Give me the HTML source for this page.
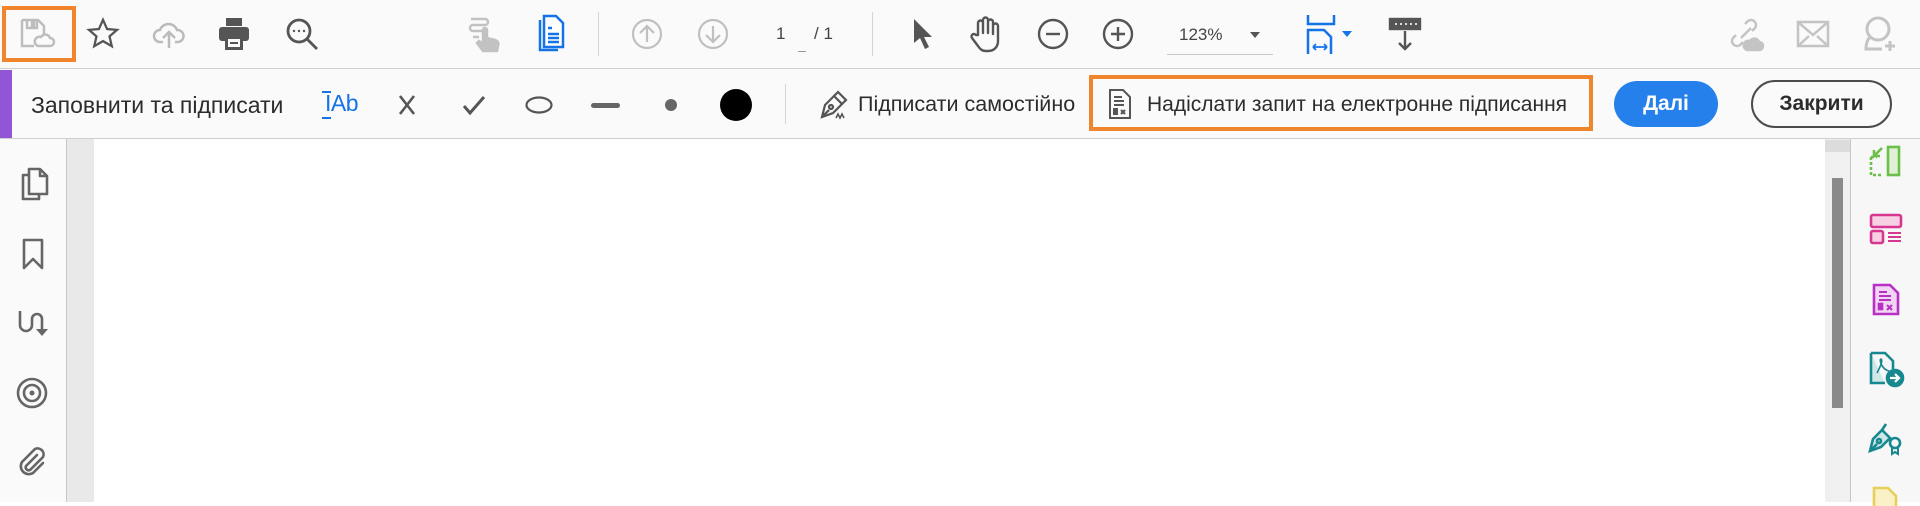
<!DOCTYPE html>
<html><head><meta charset="utf-8"><style>
*{margin:0;padding:0;box-sizing:border-box}
body{width:1920px;height:502px;overflow:hidden;background:#fff;font-family:"Liberation Sans","DejaVu Sans",sans-serif;position:relative}
.a{position:absolute}
svg{position:absolute;overflow:visible}
.t{position:absolute;white-space:nowrap;color:#2c2c2c}
</style></head><body>
<div class="a" style="left:0;top:0;width:1920px;height:69px;background:#fafafa;border-bottom:1px solid #cfcfcf"></div>
<div class="a" style="left:0;top:69px;width:1920px;height:70px;background:#fafafa;border-bottom:1px solid #cfcfcf"></div>
<div class="a" style="left:0;top:70px;width:12px;height:68px;background:#9155d6"></div>
<div class="a" style="left:0;top:139px;width:67px;height:363px;background:#fafafa;border-right:1px solid #c8c8c8"></div>
<div class="a" style="left:67px;top:139px;width:27px;height:363px;background:#e9e9e9"></div>
<div class="a" style="left:1825px;top:139px;width:25px;height:363px;background:#f0f0f0"></div>
<div class="a" style="left:1825px;top:140px;width:25px;height:12px;background:#dcdcdc"></div>
<div class="a" style="left:1832px;top:178px;width:11px;height:230px;background:#8a8a8a"></div>
<div class="a" style="left:1850px;top:139px;width:70px;height:363px;background:#f7f7f7;border-left:1px solid #c8c8c8"></div>

<div class="a" style="left:2px;top:6px;width:74px;height:56px;border:4px solid #f0852d"></div>
<svg style="left:20px;top:18px" width="36" height="32" viewBox="0 0 36 32" fill="none" stroke="#bdbdbd" stroke-width="2.5"><path d="M2 2h16l6 6v8M2 2v26h12"/><path d="M7 2v8h10V2"/><rect x="12" y="4" width="2" height="4" fill="#bdbdbd"/><path d="M18 28h12a4 4 0 0 0 0-8 5 5 0 0 0-9-1 4 4 0 0 0-3 9z"/></svg>
<svg style="left:86px;top:17px" width="34" height="34" viewBox="0 0 24 24" fill="none" stroke="#555" stroke-width="1.6"><path d="M12 2l2.9 6.5 7 .6-5.3 4.6 1.6 6.9L12 17l-6.2 3.6 1.6-6.9L2.1 9.1l7-.6z"/></svg>
<svg style="left:152px;top:18px" width="34" height="32" viewBox="0 0 34 32" fill="none" stroke="#bbb" stroke-width="2.5"><path d="M11 24H8a6 6 0 0 1 0-12 9 9 0 0 1 17 0 6 6 0 0 1 1 12h-3"/><path d="M17 30V14M11 20l6-6 6 6"/></svg>
<svg style="left:218px;top:17px" width="32" height="34" viewBox="0 0 32 34"><rect x="8" y="1" width="16" height="8" fill="#555"/><rect x="1" y="10" width="30" height="14" rx="3" fill="#555"/><rect x="7" y="19" width="18" height="14" fill="#555"/><rect x="10" y="22" width="12" height="8" fill="#fafafa"/><rect x="12" y="25" width="8" height="2" fill="#555"/></svg>
<svg style="left:285px;top:17px" width="36" height="36" viewBox="0 0 36 36" fill="none" stroke="#555" stroke-width="2.8"><circle cx="14" cy="14" r="11"/><path d="M22 22l10 10"/><circle cx="9" cy="14" r="1.2" fill="#555" stroke="none"/><circle cx="14" cy="14" r="1.2" fill="#555" stroke="none"/><circle cx="19" cy="14" r="1.2" fill="#555" stroke="none"/></svg>
<svg style="left:467px;top:15px" width="38" height="38" viewBox="0 0 38 38" fill="none" stroke="#c2c2c2" stroke-width="2.5"><path d="M4 4h14a3 3 0 0 1 0 6H6a3 3 0 0 0 0 6h10M6 22h6"/><path d="M16 36l-6-8 2-2 4 3V15a2 2 0 0 1 4 0v8l8 2c3 1 4 3 3 6l-1 5z" fill="#c2c2c2"/></svg>
<svg style="left:536px;top:14px" width="30" height="38" viewBox="0 0 30 38" fill="none" stroke="#1473e6" stroke-width="2.5"><path d="M4 6v30h18"/><path d="M8 2h12l7 7v24H8z" fill="#fff"/><path d="M12 14h4M12 20h11M12 24h11M12 28h11"/></svg>
<div class="a" style="left:598px;top:12px;width:1px;height:44px;background:#d5d5d5"></div>
<svg style="left:631px;top:18px" width="32" height="32" viewBox="0 0 32 32" fill="none" stroke="#c0c0c0" stroke-width="2.2"><circle cx="16" cy="16" r="14"/><path d="M16 24V8M9 15l7-7 7 7"/></svg>
<svg style="left:697px;top:18px" width="32" height="32" viewBox="0 0 32 32" fill="none" stroke="#c0c0c0" stroke-width="2.2"><circle cx="16" cy="16" r="14"/><path d="M16 8v16M9 17l7 7 7-7"/></svg>
<div class="t" style="left:776px;top:24px;font-size:17px;color:#444">1</div>
<div class="a" style="left:798px;top:51px;width:8px;height:1px;background:#999"></div>
<div class="t" style="left:814px;top:24px;font-size:17px;color:#444">/ 1</div>
<div class="a" style="left:872px;top:12px;width:1px;height:44px;background:#d5d5d5"></div>
<svg style="left:912px;top:18px" width="22" height="32" viewBox="0 0 22 32"><path d="M2 1v24l6-5 5 11 4-2-5-10h8z" fill="#555"/></svg>
<svg style="left:970px;top:15px" width="34" height="38" viewBox="0 0 34 38" fill="none" stroke="#555" stroke-width="2.4" stroke-linejoin="round"><path d="M8 20V8a2.5 2.5 0 0 1 5 0v10V5a2.5 2.5 0 0 1 5 0v13V7a2.5 2.5 0 0 1 5 0v12-8a2.5 2.5 0 0 1 5 0v15c0 6-4 10-10 10h-2c-4 0-6-2-8-5l-6-8a2.5 2.5 0 0 1 4-3z"/></svg>
<svg style="left:1037px;top:18px" width="32" height="32" viewBox="0 0 32 32" fill="none" stroke="#555" stroke-width="2.4"><circle cx="16" cy="16" r="14"/><path d="M9 16h14"/></svg>
<svg style="left:1102px;top:18px" width="32" height="32" viewBox="0 0 32 32" fill="none" stroke="#555" stroke-width="2.4"><circle cx="16" cy="16" r="14"/><path d="M9 16h14M16 9v14"/></svg>
<div class="t" style="left:1179px;top:25px;font-size:17px;color:#444">123%</div>
<div class="a" style="left:1250px;top:32px;width:0;height:0;border-left:5px solid transparent;border-right:5px solid transparent;border-top:6px solid #555"></div>
<div class="a" style="left:1167px;top:54px;width:106px;height:1px;background:#c8c8c8"></div>
<svg style="left:1305px;top:14px" width="32" height="40" viewBox="0 0 32 40" fill="none" stroke="#1473e6" stroke-width="2.5"><path d="M3 1v9h26V1"/><path d="M3 40V16h16l7 7v17"/><path d="M8 33h14M8 33l3-3M8 33l3 3M22 33l-3-3M22 33l-3 3" stroke-width="1.8"/></svg>
<div class="a" style="left:1342px;top:31px;width:0;height:0;border-left:5px solid transparent;border-right:5px solid transparent;border-top:6px solid #1473e6"></div>
<svg style="left:1388px;top:17px" width="34" height="36" viewBox="0 0 34 36" fill="none" stroke="#555" stroke-width="2.4"><rect x="2" y="2" width="30" height="10" fill="#555"/><path d="M8 6v2M13 6v2M18 6v2M23 6v2M28 6v2" stroke="#fff" stroke-width="1.6"/><path d="M17 14v18M11 26l6 6 6-6"/></svg>
<svg style="left:1727px;top:16px" width="36" height="36" viewBox="0 0 36 36" fill="none" stroke="#c4c4c4" stroke-width="2.5"><path d="M14 22l10-10M18 8l3-3a5 5 0 0 1 7 7l-3 3M16 26l-3 3a5 5 0 0 1-7-7l3-3"/><path d="M20 34h12a4 4 0 0 0 0-8 5 5 0 0 0-9-1 4 4 0 0 0-3 9z" fill="#c4c4c4"/></svg>
<svg style="left:1796px;top:20px" width="34" height="28" viewBox="0 0 34 28" fill="none" stroke="#c4c4c4" stroke-width="2.5"><rect x="2" y="2" width="30" height="24"/><path d="M2 2l15 13L32 2M2 26l11-10M32 26L21 16"/></svg>
<svg style="left:1864px;top:15px" width="34" height="38" viewBox="0 0 34 38" fill="none" stroke="#c4c4c4" stroke-width="3"><circle cx="14" cy="14" r="11"/><path d="M6 22c-3 3-4 7-4 12h16"/><path d="M26 26v10M21 31h10"/></svg>

<div class="t" style="left:31px;top:92px;font-size:23px;color:#2c2c2c">Заповнити та підписати</div>
<div class="t" style="left:325px;top:90px;font-size:23px;color:#1473e6;letter-spacing:-0.5px"><span style="font-weight:300">I</span>Ab</div>
<div class="a" style="left:322px;top:91px;width:9px;height:2px;background:#1473e6"></div>
<div class="a" style="left:322px;top:117px;width:9px;height:2px;background:#1473e6"></div>
<svg style="left:398px;top:95px" width="18" height="20" viewBox="0 0 18 20" fill="none" stroke="#555" stroke-width="2.6"><path d="M2 1l14 18M16 1L2 19"/></svg>
<svg style="left:462px;top:95px" width="24" height="20" viewBox="0 0 24 20" fill="none" stroke="#555" stroke-width="3"><path d="M2 11l6 7L22 2"/></svg>
<svg style="left:525px;top:96px" width="28" height="18" viewBox="0 0 28 18" fill="none" stroke="#555" stroke-width="2.2"><ellipse cx="14" cy="9" rx="12.5" ry="7.5"/></svg>
<div class="a" style="left:591px;top:103px;width:29px;height:5px;border-radius:3px;background:#666"></div>
<div class="a" style="left:665px;top:99px;width:12px;height:12px;border-radius:50%;background:#666"></div>
<div class="a" style="left:720px;top:89px;width:32px;height:32px;border-radius:50%;background:#000"></div>
<div class="a" style="left:785px;top:84px;width:1px;height:40px;background:#d5d5d5"></div>
<svg style="left:818px;top:89px" width="32" height="32" viewBox="0 0 32 32" fill="none" stroke="#555" stroke-width="2.2"><path d="M4 28l3-12 9-9 8 8-9 9z"/><path d="M16 7l4-4 8 8-4 4"/><path d="M4 28l7-7"/><circle cx="13" cy="18" r="2"/><path d="M18 29l2-4 2 4 2-4 2 4" stroke-width="1.6"/></svg>
<div class="t" style="left:858px;top:92px;font-size:21.5px;color:#2c2c2c">Підписати самостійно</div>
<div class="a" style="left:1089px;top:75px;width:504px;height:56px;border:4px solid #f0852d"></div>
<svg style="left:1109px;top:89px" width="22" height="30" viewBox="0 0 22 30" fill="none" stroke="#555" stroke-width="2"><path d="M1 1h13l7 7v21H1z"/><path d="M5 8h8M5 12h10M5 16h10"/><rect x="5" y="20" width="3" height="5" fill="#555"/><path d="M12 21l4 4M16 21l-4 4"/></svg>
<div class="t" style="left:1147px;top:93px;font-size:21px;color:#2c2c2c">Надіслати запит на електронне підписання</div>
<div class="a" style="left:1614px;top:81px;width:104px;height:46px;border-radius:23px;background:#2680eb;color:#fff;font-weight:bold;font-size:21px;text-align:center;line-height:46px">Далі</div>
<div class="a" style="left:1751px;top:80px;width:141px;height:48px;border-radius:24px;border:2px solid #4b4b4b;color:#2c2c2c;font-weight:bold;font-size:21px;text-align:center;line-height:44px">Закрити</div>

<svg style="left:20px;top:167px" width="30" height="34" viewBox="0 0 30 34" fill="none" stroke="#666" stroke-width="2.6" stroke-linejoin="round"><path d="M8 8H3v24h16v-5"/><path d="M9 2h11l7 7v18H9z"/><path d="M20 2v7h7"/></svg>
<svg style="left:22px;top:238px" width="22" height="32" viewBox="0 0 22 32" fill="none" stroke="#666" stroke-width="2.6" stroke-linejoin="round"><path d="M2 2h18v28l-9-9-9 9z"/></svg>
<svg style="left:17px;top:309px" width="32" height="30" viewBox="0 0 32 30" fill="none" stroke="#666" stroke-width="2.6"><path d="M3 2v14a6 6 0 0 0 12 0V10a5 5 0 0 1 10 0v10"/><path d="M19 20h12l-6 7z" fill="#666" stroke="none"/></svg>
<svg style="left:16px;top:377px" width="32" height="32" viewBox="0 0 32 32" fill="none" stroke="#666" stroke-width="2.6"><circle cx="16" cy="16" r="14"/><circle cx="16" cy="16" r="8"/><circle cx="16" cy="16" r="2.5" fill="#666" stroke="none"/></svg>
<svg style="left:17px;top:446px" width="32" height="32" viewBox="0 0 32 32" fill="none" stroke="#666" stroke-width="2.6" stroke-linecap="round"><path d="M20 9L9 20a3 3 0 0 0 4 4l13-13a6 6 0 0 0-8-8L5 16a8 8 0 0 0 11 11l10-10"/></svg>

<svg style="left:1869px;top:145px" width="32" height="32" viewBox="0 0 32 32" fill="none" stroke="#6cc04a" stroke-width="2.6"><rect x="19" y="2" width="11" height="28" fill="#dff0d6"/><path d="M2 12v18h12M2 12h6" stroke-dasharray="3 2"/><path d="M13 3l-8 8M5 5v6h6"/></svg>
<svg style="left:1869px;top:213px" width="34" height="32" viewBox="0 0 34 32" fill="none" stroke="#d83790" stroke-width="2.6"><rect x="2" y="2" width="30" height="12" rx="2" fill="#f7d0e4"/><rect x="2" y="18" width="12" height="12" rx="2" fill="#f7d0e4"/><path d="M19 20h13M19 24h13M19 28h13" stroke-width="2"/></svg>
<svg style="left:1872px;top:283px" width="28" height="33" viewBox="0 0 28 33" fill="none" stroke="#b930c5" stroke-width="2.6"><path d="M2 2h16l8 8v21H2z" fill="#f1d6f3"/><path d="M7 9h8M7 13h12M7 17h12" stroke-width="2"/><rect x="7" y="21" width="3" height="5" fill="#b930c5"/><path d="M15 22l5 5M20 22l-5 5" stroke-width="2"/></svg>
<svg style="left:1869px;top:351px" width="36" height="36" viewBox="0 0 36 36" fill="none" stroke="#17888f" stroke-width="2.6"><path d="M2 2h14l8 8v8" /><path d="M2 2v30h14" fill="#d0e7e8"/><path d="M8 22c4-8 6-12 4-14-2 0 0 10 8 12" stroke-width="1.6"/><circle cx="26" cy="27" r="8" fill="#17888f"/><path d="M21 27h8M26 23l4 4-4 4" stroke="#fff" stroke-width="2.2"/></svg>
<svg style="left:1867px;top:419px" width="36" height="36" viewBox="0 0 36 36" fill="none" stroke="#17888f" stroke-width="2.6"><path d="M3 32l3-12 9-9 8 8-9 9z" fill="#d0e7e8"/><path d="M15 11l4-6M3 32l7-7"/><circle cx="12" cy="22" r="2"/><circle cx="28" cy="24" r="5"/><path d="M25 28v7l3-2 3 2v-7" stroke-width="2"/></svg>
<svg style="left:1872px;top:486px" width="28" height="20" viewBox="0 0 28 20" fill="none" stroke="#e8cf5a" stroke-width="2.6"><path d="M2 20V2h14l8 8v10" fill="#fbf1c6"/></svg>
</body></html>
